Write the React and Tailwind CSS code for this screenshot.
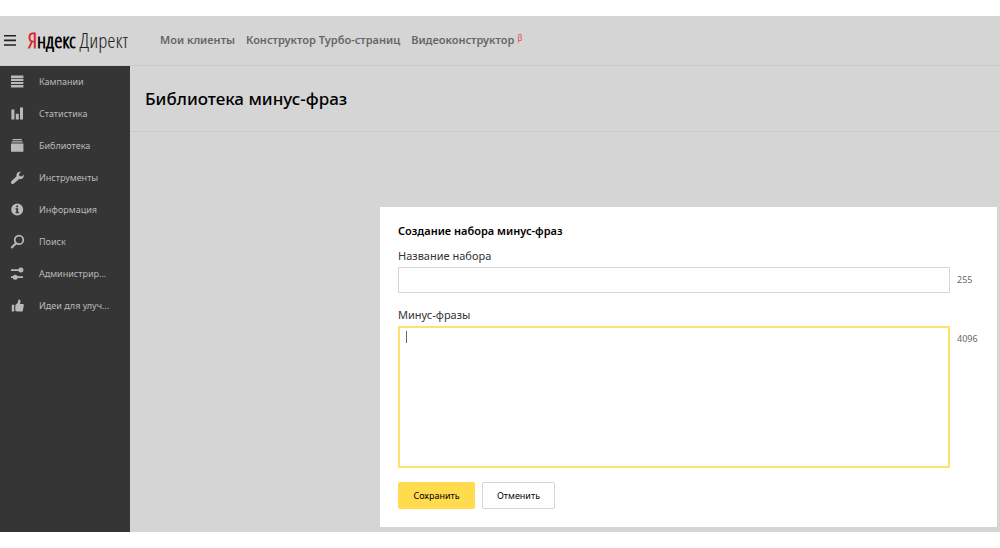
import React from "react";

const menu = [
  {
    label: "Кампании",
    icon: <path d="M0 .4h12.400v2.500H0zM0 3.800h12.400v2.100H0zM0 6.900h12.400v2.100H0zM0 10h12.400v2.400H0z" />,
  },
  {
    label: "Статистика",
    icon: <path d="M.4 2.400h3v10.200h-3zM4.800 6.800h3v5.800h-3zM9 .6h3v12H9z" />,
  },
  {
    label: "Библиотека",
    icon: <path d="M1.600 0h9.200v1.300H1.600zM.8 2.200h10.800v1.400H.8zM0 4.600h12.400v8.200H0z" />,
  },
  {
    label: "Инструменты",
    icon: (
      <path d="M12.700 3.700c.3 1.500-.2 3-1.400 3.700-.9.600-1.900.6-2.800.3L3.200 12.300c-.8.800-2 .8-2.700.1-.8-.7-.7-1.800.1-2.500L5.600 5.200c-.3-1.300 0-2.600.9-3.500C7.400.700 8.700.400 10 .8L8 3.100l.4 2 2.100.5z" />
    ),
  },
  {
    label: "Информация",
    icon: (
      <path
        fillRule="evenodd"
        d="M6.200.5a6 6 0 1 0 0 12 6 6 0 0 0 0-12zM5.300 2.600h1.800v1.600H5.300zM4.600 5.300h2.500v3.900h.9v1.100H4.400V9.200h.9V6.400h-.7z"
      />
    ),
  },
  {
    label: "Поиск",
    icon: (
      <g fill="none" stroke="currentColor">
        <circle cx="8" cy="4.900" r="4.300" strokeWidth="1.700" />
        <path d="M5 8.200.3 12.900" strokeWidth="2.100" />
      </g>
    ),
  },
  {
    label: "Администрир...",
    icon: (
      <>
        <path d="M0 2.200h12v1.700H0zM0 9.300h12V11H0z" />
        <circle cx="9.900" cy="3" r="2.500" />
        <circle cx="4.200" cy="10.200" r="2.500" />
      </>
    ),
  },
  {
    label: "Идеи для улуч...",
    icon: (
      <path d="M.8 5.800h2.400v6.800H.8zM4.300 6.200 6.900 3.500 7.400.5c1.600-.2 2.200.8 2.100 2.200L8.900 5h2.700c.9 0 1.300.6 1.200 1.400l-.9 4.800c-.2.9-.7 1.400-1.500 1.400H6.200l-1.900-.9z" />
    ),
  },
];

function SideMenu() {
  return (
    <nav className="w-[130px] shrink-0 bg-[#353535] text-[#b9b9b9]">
      <ul>
        {menu.map((item) => (
          <li key={item.label}>
            <a href="#" className="flex h-8 items-center gap-[15px] pb-px pl-[11px] text-[9px]">
              <svg viewBox="0 0 13 13" className="size-[13px] shrink-0 overflow-visible" fill="currentColor" aria-hidden="true">
                {item.icon}
              </svg>
              <span className="whitespace-nowrap">{item.label}</span>
            </a>
          </li>
        ))}
      </ul>
    </nav>
  );
}

function Header() {
  return (
    <header className="flex h-[50px] items-center border-b border-[#c9cbcb] bg-[#d5d5d5]">
      <button type="button" aria-label="Меню" className="ml-1 flex h-6 w-3 items-center">
        <svg viewBox="0 0 12 11" className="h-[11px] w-3" fill="#222" aria-hidden="true">
          <path d="M0 0h12v1.600H0zM0 4.600h12v1.600H0zM0 9.200h12v1.600H0z" />
        </svg>
      </button>
      <a
        href="#"
        className="ml-3 w-[132px] whitespace-nowrap font-['Open_Sans_Condensed_Light','Open_Sans_Condensed',sans-serif] text-[21px] text-[#222]"
      >
        <span className="font-semibold text-black">
          <span className="text-[#d8232a]">Я</span>ндекс
        </span>{" "}
        <span className="font-light">Директ</span>
      </a>
      <nav className="flex gap-[11px] text-[11px] font-semibold text-[#666]">
        <a href="#">Мои клиенты</a>
        <a href="#">Конструктор Турбо-страниц</a>
        <a href="#" className="flex gap-[3px]">
          Видеоконструктор
          <span className="text-[8px] leading-3 font-normal text-[#e04a4a]">β</span>
        </a>
      </nav>
    </header>
  );
}

function PhraseDialog() {
  return (
    <form
      role="dialog"
      aria-labelledby="dialog-title"
      className="mt-[75px] mr-[3px] mb-[5px] ml-[250px] bg-white pt-4 pb-[18px] pl-[18px] text-[11px] text-[#333]"
    >
      <h2 id="dialog-title" className="text-[11px] leading-4 font-semibold text-black">
        Создание набора минус-фраз
      </h2>
      <label htmlFor="set-name" className="mt-2 block leading-[18px]">
        Название набора
      </label>
      <div className="mt-0.5 flex items-center gap-[7px]">
        <input id="set-name" className="h-[26px] min-w-0 flex-1 border border-[#d5d5d5] px-2 outline-none" />
        <span className="w-10 text-[9px] text-[#666]">255</span>
      </div>
      <label htmlFor="phrases" className="mt-[13px] block leading-[18px]">
        Минус-фразы
      </label>
      <div className="mt-0.5 flex items-start gap-[7px]">
        <div className="relative flex min-w-0 flex-1">
          <textarea id="phrases" className="h-[142px] w-full resize-none border-2 border-[#ffe26b] px-1.5 py-1 outline-none" />
          <span className="absolute top-[5px] left-2 h-3 w-px bg-[#666]" />
        </div>
        <span className="w-10 pt-[7px] text-[9px] leading-3 text-[#666]">4096</span>
      </div>
      <div className="mt-[14px] flex gap-[7px] text-[9px] text-black">
        <button type="submit" className="h-[27px] w-[77px] rounded-[2px] bg-[#ffdb4d]">
          Сохранить
        </button>
        <button type="button" className="h-[27px] w-[73px] rounded-[2px] border border-[#d5d5d5] bg-white">
          Отменить
        </button>
      </div>
    </form>
  );
}

export default function App() {
  return (
    <div className="min-h-screen bg-white py-4 font-['Noto_Sans',sans-serif]">
      <Header />
      <div className="flex">
        <SideMenu />
        <main className="flex min-w-0 flex-1 flex-col bg-[#d5d5d5]">
          <div className="flex h-[66px] items-center border-b border-[#c9cbcb] pl-[15px]">
            <h1 className="text-[17px] font-medium text-black">Библиотека минус-фраз</h1>
          </div>
          <PhraseDialog />
        </main>
      </div>
    </div>
  );
}
